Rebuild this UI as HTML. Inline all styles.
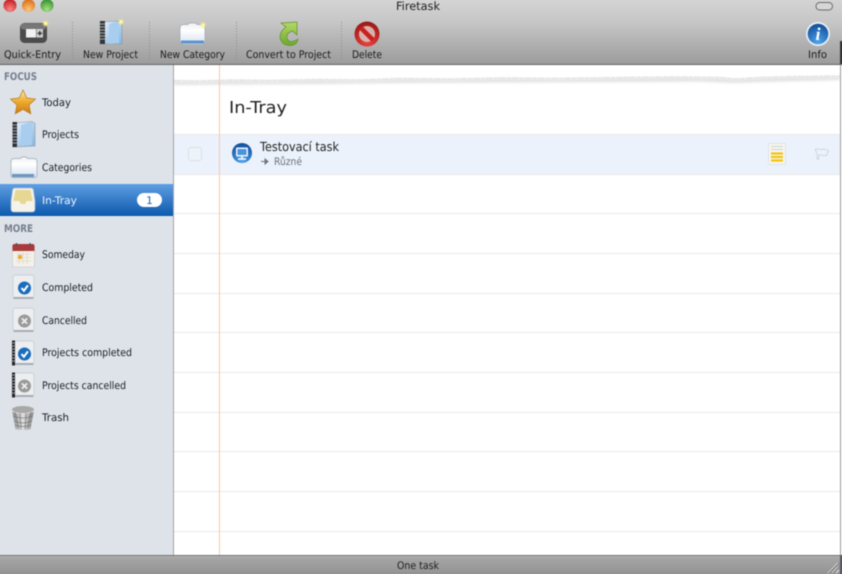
<!DOCTYPE html>
<html lang="cs"><head><meta charset="utf-8"><title>Firetask</title>
<style>
html,body{margin:0;padding:0;width:842px;height:574px;overflow:hidden;background:#fff}
#c{position:absolute;left:0;top:0;width:842px;height:574px;overflow:hidden}
#w{position:absolute;left:-5px;top:-5px;width:852px;height:584px;filter:blur(.4px)}
svg{display:block}
text{font-family:"DejaVu Sans","Liberation Sans",sans-serif;font-size:10.5px;fill:#1c1c1c;text-rendering:geometricPrecision}
.t{font-size:10.5px;fill:#1a1a1a}
.s{font-size:10.5px;fill:#171c26}
.h{font-size:10.5px;font-weight:bold;fill:#767e8c}
</style></head><body><div id="c"><div id="w">
<svg width="852" height="584" viewBox="-5 -5 852 584" xmlns="http://www.w3.org/2000/svg">
<defs>
<linearGradient id="tb" x1="0" y1="0" x2="0" y2="1"><stop offset="0" stop-color="#d4d4d4"/><stop offset=".35" stop-color="#c6c6c6"/><stop offset="1" stop-color="#9c9c9c"/></linearGradient>
<linearGradient id="sb" x1="0" y1="0" x2="0" y2="1"><stop offset="0" stop-color="#a9a9a9"/><stop offset="1" stop-color="#939393"/></linearGradient>
<linearGradient id="sel" x1="0" y1="0" x2="0" y2="1"><stop offset="0" stop-color="#5f9fe3"/><stop offset="1" stop-color="#0c58ad"/></linearGradient>
<linearGradient id="star" x1="0" y1="0" x2="0" y2="1"><stop offset="0" stop-color="#fbeaa0"/><stop offset=".5" stop-color="#eeaa2a"/><stop offset="1" stop-color="#c9791a"/></linearGradient>
<linearGradient id="book" x1="0" y1="0" x2="1" y2="1"><stop offset="0" stop-color="#eef4fa"/><stop offset="1" stop-color="#7fb4e4"/></linearGradient>
<linearGradient id="fold" x1="0" y1="0" x2="0" y2="1"><stop offset="0" stop-color="#eef0f2"/><stop offset=".35" stop-color="#ffffff"/><stop offset="1" stop-color="#d4e1ee"/></linearGradient>
<linearGradient id="grn" x1="0" y1="0" x2="0" y2="1"><stop offset="0" stop-color="#b4d968"/><stop offset="1" stop-color="#6ea82e"/></linearGradient>
<radialGradient id="red" cx=".5" cy=".8" r=".9"><stop offset="0" stop-color="#f0453f"/><stop offset="1" stop-color="#8c0f10"/></radialGradient>
<radialGradient id="blu" cx=".5" cy=".9" r=".9"><stop offset="0" stop-color="#4ea5ec"/><stop offset="1" stop-color="#104c9a"/></radialGradient>
<radialGradient id="l1" cx=".5" cy=".8" r=".8"><stop offset="0" stop-color="#f58a86"/><stop offset="1" stop-color="#c4161f"/></radialGradient>
<radialGradient id="l2" cx=".5" cy=".8" r=".8"><stop offset="0" stop-color="#fcc67a"/><stop offset="1" stop-color="#d86a14"/></radialGradient>
<radialGradient id="l3" cx=".5" cy=".8" r=".8"><stop offset="0" stop-color="#a8e088"/><stop offset="1" stop-color="#2f8c28"/></radialGradient>
<linearGradient id="can" x1="0" y1="0" x2="1" y2="0"><stop offset="0" stop-color="#8a8a8a"/><stop offset=".5" stop-color="#e0e0e0"/><stop offset="1" stop-color="#808080"/></linearGradient>
<filter id="soft" x="-5%" y="-300%" width="110%" height="700%"><feGaussianBlur stdDeviation="1.400"/></filter>
<filter id="glow" x="-100%" y="-100%" width="300%" height="300%"><feGaussianBlur stdDeviation=".8"/></filter>
<g id="spark"><circle r="2.400" fill="#fff27a" filter="url(#glow)"/><circle r="1" fill="#fffde0"/></g>
<g id="chk"><rect x="-10.500" y="-12" width="21" height="23.500" rx="2.500" fill="#eceef0" stroke="#c4c8cc" stroke-width=".7"/><rect x="-10" y="10" width="20" height="2" fill="#a9adb2"/><circle cx="1" cy="1" r="6.500" fill="#1a6dbc"/><path d="M-2 1l2.400 2.800 4-5.400" fill="none" stroke="#fff" stroke-width="2"/></g>
<g id="cnl"><rect x="-10.500" y="-12" width="21" height="23.500" rx="2.500" fill="#eceef0" stroke="#c4c8cc" stroke-width=".7"/><rect x="-10" y="10" width="20" height="2" fill="#a9adb2"/><circle cx="1" cy="1" r="6.500" fill="#9a9a9a"/><path d="M-1.600 -1.600l5.200 5.200m0-5.200l-5.200 5.200" fill="none" stroke="#eee" stroke-width="1.800"/></g>
<g id="spine"><rect x="-11.500" y="-12.500" width="3" height="25" fill="#26282b"/><path d="M-12.500 -10h5M-12.500 -7h5M-12.500 -4h5M-12.500 -1h5M-12.500 2h5M-12.500 5h5M-12.500 8h5" stroke="#b9bcc0" stroke-width=".8"/></g>
</defs>

<!-- content -->
<rect x="-5" y="-5" width="852" height="584" fill="#fff"/>
<path d="M174 81 L200 81.500 L230 80.500 L270 81 L320 80 L360 80.500 L400 79 L450 79.500 L500 78.500 L560 79 L620 78 L680 77.500 L720 78 L735 79.500 L760 78 L800 77 L840 76.500 V80 L800 81 L760 82 L735 83 L700 81.500 L620 82 L500 82.500 L400 83 L320 84 L230 84.500 L174 85Z" fill="#e2e2e2" filter="url(#soft)"/>
<path d="M174 80.500 L200 81 L230 80 L270 80.500 L320 79.500 L360 80 L400 78.500 L450 79 L500 78 L560 78.500 L620 77.500 L680 77 L720 77.500 L735 79 L760 77.500 L800 76.500 L840 76" fill="none" stroke="#e0e0e0" stroke-width="1.100" stroke-dasharray="7 1 4 1"/>
<rect x="174" y="135" width="666" height="39" fill="#ebf2fb"/>
<path d="M174 134.500H840M174 174.500H840M174 213.500H840M174 253.500H840M174 293.500H840M174 332.500H840M174 372.500H840M174 412.500H840M174 451.500H840M174 491.500H840M174 531.500H840" stroke="#ebebeb"/>
<path d="M219.500 65V555" stroke="#f6c8b0"/>
<rect x="840" y="65" width="1" height="490" fill="#9c9c9c"/>

<text x="229" y="113" textLength="58" lengthAdjust="spacingAndGlyphs" style="font-size:16.500px;fill:#222">In-Tray</text>

<!-- task row -->
<rect x="188.500" y="147.500" width="13" height="13" rx="2.500" fill="#eef3f9" stroke="#dde1e6"/>
<circle cx="242" cy="153" r="10" fill="url(#blu)"/>
<rect x="236" y="147.500" width="12" height="9" rx="1" fill="#eef4fb"/>
<rect x="237.500" y="149" width="9" height="6" fill="#4a94dc"/>
<path d="M242 156.500v2M238 159h8" stroke="#eef4fb" stroke-width="1.800"/>
<text x="260" y="151" textLength="79" lengthAdjust="spacingAndGlyphs" style="font-size:12.500px;fill:#222">Testovací task</text>
<path d="M261 161.500h6M265 159l3 2.500-3 2.500z" fill="#6e7680" stroke="#6e7680"/>
<text x="274" y="165" textLength="28" lengthAdjust="spacingAndGlyphs" style="font-size:10.500px;fill:#6a727d">Různé</text>
<rect x="768.500" y="143.500" width="17" height="21" rx="1" fill="#f6f6ee" stroke="#dfe3e6"/>
<path d="M771 146.500h12M771 149.500h12" stroke="#cfd2d6"/>
<path d="M771 153.500h12M771 157h12M771 160.500h12" stroke="#f3c414" stroke-width="2.300"/>
<path d="M815 149.500c4-1.500 6 1 9-.5l4.500 1.500-2 5c-3 .8-5-1-7.500-.5l-.5 4.500-1.200-.3-.3-5.700z" fill="none" stroke="#d3d6da"/>

<!-- sidebar -->
<rect x="-5" y="65" width="178" height="490" fill="#dee3ea"/>
<rect x="173" y="65" width="1" height="490" fill="#a2a4a8"/>
<rect x="-5" y="184" width="178" height="32" fill="url(#sel)"/>
<text class="h" x="4" y="80" textLength="33" lengthAdjust="spacingAndGlyphs">FOCUS</text>
<text class="h" x="4" y="232" textLength="29" lengthAdjust="spacingAndGlyphs">MORE</text>

<!-- star -->
<path d="M23 90l3.800 8 8.700 1-6.400 6 1.700 8.800L23 109.500l-7.800 4.300 1.700-8.800-6.400-6 8.700-1z" fill="url(#star)" stroke="#b87a20" stroke-width=".7"/>
<text class="s" x="42" y="106" textLength="29" lengthAdjust="spacingAndGlyphs">Today</text>

<!-- projects -->
<path d="M13 123l19-1.500 3 2V146l-22 1z" fill="url(#book)" stroke="#8e959c" stroke-width=".6"/>
<path d="M21 125l11-3v23l-11 1z" fill="#a8cdee"/>
<rect x="12.500" y="122" width="4.500" height="25" fill="#2f3135"/>
<path d="M12 125h5.500M12 128h5.500M12 131h5.500M12 134h5.500M12 137h5.500M12 140h5.500M12 143h5.500" stroke="#c1c4c8" stroke-width=".8"/>
<text class="s" x="42" y="138" textLength="37" lengthAdjust="spacingAndGlyphs">Projects</text>

<!-- categories -->
<path d="M11 175v-13q0-3.500 3.500-3.500h6l1.200-1.500h4.600l1.200 1.500h6q3.500 0 3.500 3.500v13q0 2.500-2.500 2.500h-21q-2.500 0-2.500-2.500z" fill="url(#fold)" stroke="#a0a8b1" stroke-width=".7"/>
<rect x="12" y="174" width="22" height="3" fill="#6c97c2"/>
<text class="s" x="42" y="171" textLength="50" lengthAdjust="spacingAndGlyphs">Categories</text>

<!-- in-tray -->
<path d="M15 188h16q2 0 2.400 2l1.600 11v8q0 3-3 3H14q-3 0-3-3v-8l1.600-11q.4-2 2.400-2z" fill="#f4f3ec" stroke="#aeb8c2" stroke-width=".7"/>
<path d="M15.500 190h15l2.200 11h-6l-1.700 3h-4l-1.700-3h-6z" fill="#e8d792"/>
<text x="42" y="204" textLength="35" lengthAdjust="spacingAndGlyphs" style="font-size:10.500px;fill:#eef5fd">In-Tray</text>
<rect x="137" y="193" width="25" height="14" rx="7" fill="#fff"/>
<text x="149.500" y="204" text-anchor="middle" style="font-size:10.500px;fill:#1a5ea8">1</text>

<!-- someday -->
<rect x="12.500" y="245" width="22" height="22" rx="1.500" fill="#f3f1e8" stroke="#c2c3c5" stroke-width=".6"/>
<path d="M12.500 251v-5q0-2 2-2h18q2 0 2 2v5z" fill="#a83a3c"/>
<path d="M16.500 243v3M30 243v3" stroke="#555" stroke-width="1.400"/>
<path d="M16 254h15M16 257.500h15M16 261h15M19 252v12M23 252v12M27 252v12" stroke="#e2dfd4"/>
<rect x="18" y="255" width="4" height="4" fill="#eeaa30"/>
<text class="s" x="42" y="258" textLength="43" lengthAdjust="spacingAndGlyphs">Someday</text>

<use href="#chk" x="23.500" y="287"/>
<text class="s" x="42" y="291" textLength="51" lengthAdjust="spacingAndGlyphs">Completed</text>
<use href="#cnl" x="23.500" y="320"/>
<text class="s" x="42" y="324" textLength="45" lengthAdjust="spacingAndGlyphs">Cancelled</text>
<use href="#chk" x="23.500" y="353"/><use href="#spine" x="23.500" y="353"/>
<text class="s" x="42" y="356" textLength="90" lengthAdjust="spacingAndGlyphs">Projects completed</text>
<use href="#cnl" x="23.500" y="385"/><use href="#spine" x="23.500" y="385"/>
<text class="s" x="42" y="389" textLength="84" lengthAdjust="spacingAndGlyphs">Projects cancelled</text>

<!-- trash -->
<path d="M12 410l3.500 19q7.500 2.500 15 0l3.500-19z" fill="url(#can)"/>
<ellipse cx="23" cy="409.500" rx="11.500" ry="4" fill="#a8a8a8" stroke="#e2e2e2"/>
<path d="M15 412l3.500 16M20 413l1 16M26 413l-1 16M31 412l-3.500 16M13 416q10 4 20 0M14 421q9 4 18 0M15 425q8 3 16 0" stroke="#5e5e5e" stroke-width=".5" fill="none"/>
<text class="s" x="42" y="421" textLength="27" lengthAdjust="spacingAndGlyphs">Trash</text>

<!-- toolbar -->
<rect x="-5" y="-5" width="852" height="6" fill="#d4d4d4"/>
<rect x="-5" y="0" width="852" height="64" fill="url(#tb)"/>
<rect x="-5" y="64" width="852" height="1" fill="#636363"/>
<rect x="840" y="41" width="7" height="23" fill="#333"/>
<circle cx="10" cy="5.500" r="6.500" fill="url(#l1)"/>
<circle cx="28.500" cy="5.500" r="6.500" fill="url(#l2)"/>
<circle cx="47" cy="5.500" r="6.500" fill="url(#l3)"/>
<text x="418" y="10" text-anchor="middle" textLength="44" lengthAdjust="spacingAndGlyphs" style="font-size:11.500px;fill:#222">Firetask</text>
<rect x="816" y="2.500" width="16.500" height="7.500" rx="3.700" fill="#d6d6d6" stroke="#6a6a6a"/>

<path d="M72.500 22V60M149.500 22V60M236.500 22V60M341.500 22V60" stroke="#8a8a8a" stroke-dasharray="1 2"/>

<!-- quick entry -->
<rect x="20" y="23" width="27" height="20" rx="4.500" fill="#4c4c4c"/>
<rect x="20.500" y="23.500" width="26" height="6" rx="3" fill="#777"/>
<rect x="26" y="29" width="10" height="8.500" fill="#f2f2f2"/>
<rect x="36.500" y="29" width="6.500" height="8.500" fill="#cfcfcf"/>
<path d="M39.800 31v4.500M37.500 33.300h4.600" stroke="#333" stroke-width="1.300"/>
<use href="#spark" x="45.500" y="23.500"/>

<!-- new project -->
<path d="M100 22l19-1 3 2v21l-22 0z" fill="url(#book)" stroke="#8b939b" stroke-width=".6"/>
<path d="M109 24l10-3v22l-10 1z" fill="#a8cdee"/>
<rect x="100" y="21" width="5" height="23" fill="#34363a"/>
<path d="M99.500 24h5.500M99.500 27h5.500M99.500 30h5.500M99.500 33h5.500M99.500 36h5.500M99.500 39h5.500" stroke="#c4c7ca" stroke-width=".8"/>
<use href="#spark" x="121" y="22"/>

<!-- new category -->
<path d="M180 41V28q0-3.500 3.500-3.500h4.500l1.200-1.500h6.600l1.200 1.500h4.500q3.500 0 3.500 3.500v13q0 3.500-3 3.500h-19q-3 0-3-3.500z" fill="url(#fold)" stroke="#9ea6af" stroke-width=".7"/>
<rect x="181" y="40.500" width="23" height="3" fill="#5d92cc"/>
<use href="#spark" x="203" y="25"/>

<!-- convert -->
<path d="M281 23 L297 22 L297 35 L292.500 31 Q286 33 287 38 Q288 42 292 41.500 Q295 41 298 39 Q297 46 289 45.500 Q281 45 280 37 Q280 31 286 27 Z" fill="url(#grn)" stroke="#5f8f2c" stroke-width=".7"/>

<!-- delete -->
<circle cx="367" cy="34" r="12.500" fill="url(#red)"/>
<circle cx="367" cy="34" r="8" fill="#d8b2ae"/>
<path d="M361 28l12 12" stroke="#c9211f" stroke-width="4.500"/>

<!-- info -->
<circle cx="818" cy="34" r="12" fill="#eaf0f6"/>
<circle cx="818" cy="34" r="10.300" fill="url(#blu)"/>
<text x="818" y="40" text-anchor="middle" style="font-family:'Liberation Serif',serif;font-size:18px;font-weight:bold;font-style:italic;fill:#fff">i</text>

<text class="t" x="4" y="58" textLength="57" lengthAdjust="spacingAndGlyphs">Quick-Entry</text>
<text class="t" x="83" y="58" textLength="55" lengthAdjust="spacingAndGlyphs">New Project</text>
<text class="t" x="160" y="58" textLength="65" lengthAdjust="spacingAndGlyphs">New Category</text>
<text class="t" x="246" y="58" textLength="85" lengthAdjust="spacingAndGlyphs">Convert to Project</text>
<text class="t" x="352" y="58" textLength="30" lengthAdjust="spacingAndGlyphs">Delete</text>
<text class="t" x="808" y="58" textLength="19" lengthAdjust="spacingAndGlyphs">Info</text>

<!-- status bar -->
<rect x="-5" y="555" width="852" height="19" fill="url(#sb)"/>
<rect x="-5" y="573" width="852" height="6" fill="#939393"/>
<rect x="-5" y="555" width="852" height="1" fill="#6f6f6f"/>
<rect x="-5" y="556" width="852" height="1" fill="#b4b4b4"/>
<text x="418" y="569" text-anchor="middle" textLength="42" lengthAdjust="spacingAndGlyphs" style="font-size:10.500px;fill:#1f1f1f">One task</text>
<path d="M828 573l10-10M832 573l6-6M836 573l3-3" stroke="#e0e0e0"/>
<path d="M829 573l10-10M833 573l6-6" stroke="#666" stroke-width=".6"/>
<rect x="840" y="555" width="7" height="24" fill="#5a5566"/>
</svg>
</div></div></body></html>
